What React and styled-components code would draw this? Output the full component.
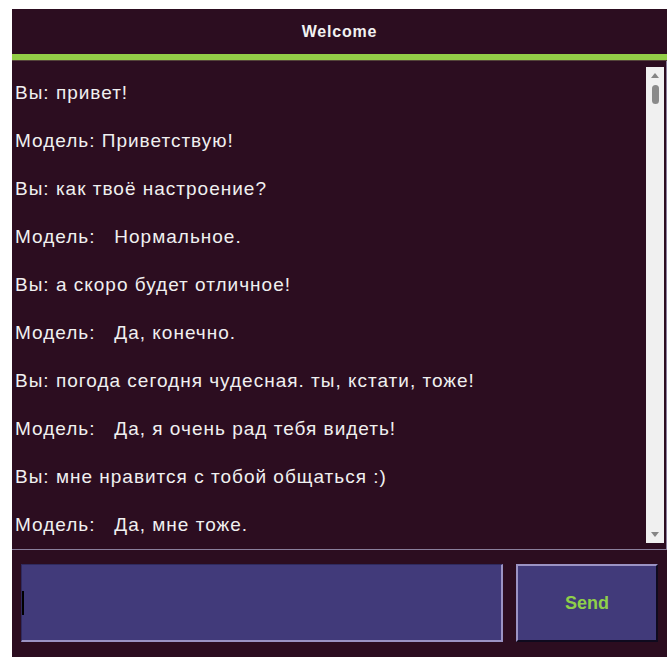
import React from 'react';
import styled, { createGlobalStyle } from 'styled-components';

const Global = createGlobalStyle`
  html, body {
    margin: 0;
    padding: 0;
    background: #ffffff;
  }
  body {
    font-family: "Liberation Sans", Arial, sans-serif;
  }
`;

const Window = styled.div`
  margin: 9px 3px 0 12px;
  height: 648px;
  background: #2c0d20;
  display: flex;
  flex-direction: column;
`;

const Header = styled.header`
  height: 45px;
  display: flex;
  align-items: center;
  justify-content: center;
  color: #f2f2f2;
  font-weight: 700;
  font-size: 16px;
  letter-spacing: 0.8px;
  border-bottom: 6px solid #93cd47;
`;

const Divider = styled.div`
  height: 1px;
  background: #54443a;
`;

const Chat = styled.div`
  height: 488px;
  display: flex;
  border-right: 1px solid #8a7f9c;
  border-bottom: 1px solid #8a7f9c;
`;

const Messages = styled.div`
  flex: 1;
  overflow: hidden;
  padding: 22px 0 0 3px;
  display: flex;
  flex-direction: column;
  gap: 28px;
`;

const Message = styled.div`
  color: #f0f0f0;
  font-size: 19px;
  line-height: 20px;
  letter-spacing: 1px;
  white-space: pre;
`;

const ScrollTrack = styled.div`
  width: 18px;
  margin: 6px 2px 6px 0;
  background: #f0f0f0;
  display: flex;
  flex-direction: column;
  align-items: center;
`;

const Arrow = styled.div`
  height: 17px;
  width: 100%;
  display: flex;
  align-items: center;
  justify-content: center;
  &::before {
    content: '';
    border-left: 4px solid transparent;
    border-right: 4px solid transparent;
    ${(p) => (p.$down ? 'border-top: 5px solid #858585;' : 'border-bottom: 5px solid #858585;')}
  }
`;

const Thumb = styled.div`
  width: 7px;
  height: 19px;
  margin-top: 1px;
  border-radius: 4px;
  background: #8a8a8a;
`;

const Spacer = styled.div`
  flex: 1;
`;

const Footer = styled.div`
  padding: 14px 9px 0;
  display: flex;
  gap: 13px;
`;

const InputBox = styled.div`
  width: 482px;
  height: 78px;
  box-sizing: border-box;
  background: #413a7a;
  border-top: 1px solid #2f2a5e;
  border-left: 1px solid #2f2a5e;
  border-bottom: 2px solid #9b93c4;
  border-right: 2px solid #9b93c4;
  display: flex;
  align-items: center;
`;

const Caret = styled.span`
  width: 2px;
  height: 24px;
  background: #000000;
`;

const SendButton = styled.button`
  width: 142px;
  height: 78px;
  box-sizing: border-box;
  background: #413a7a;
  border-top: 2px solid #9b93c4;
  border-left: 2px solid #9b93c4;
  border-bottom: 2px solid #0f0a1e;
  border-right: 2px solid #0f0a1e;
  color: #8fcf4a;
  font-family: "Liberation Sans", Arial, sans-serif;
  font-weight: 700;
  font-size: 18px;
  padding: 0;
  cursor: pointer;
`;

const history = [
  'Вы: привет!',
  'Модель: Приветствую!',
  'Вы: как твоё настроение?',
  'Модель:   Нормальное.',
  'Вы: а скоро будет отличное!',
  'Модель:   Да, конечно.',
  'Вы: погода сегодня чудесная. ты, кстати, тоже!',
  'Модель:   Да, я очень рад тебя видеть!',
  'Вы: мне нравится с тобой общаться :)',
  'Модель:   Да, мне тоже.',
];

export default function App() {
  return (
    <>
      <Global />
      <Window>
        <Header>Welcome</Header>
        <Divider />
        <Chat>
          <Messages>
            {history.map((line, i) => (
              <Message key={i}>{line}</Message>
            ))}
          </Messages>
          <ScrollTrack>
            <Arrow />
            <Thumb />
            <Spacer />
            <Arrow $down />
          </ScrollTrack>
        </Chat>
        <Footer>
          <InputBox>
            <Caret />
          </InputBox>
          <SendButton type="button">Send</SendButton>
        </Footer>
      </Window>
    </>
  );
}
